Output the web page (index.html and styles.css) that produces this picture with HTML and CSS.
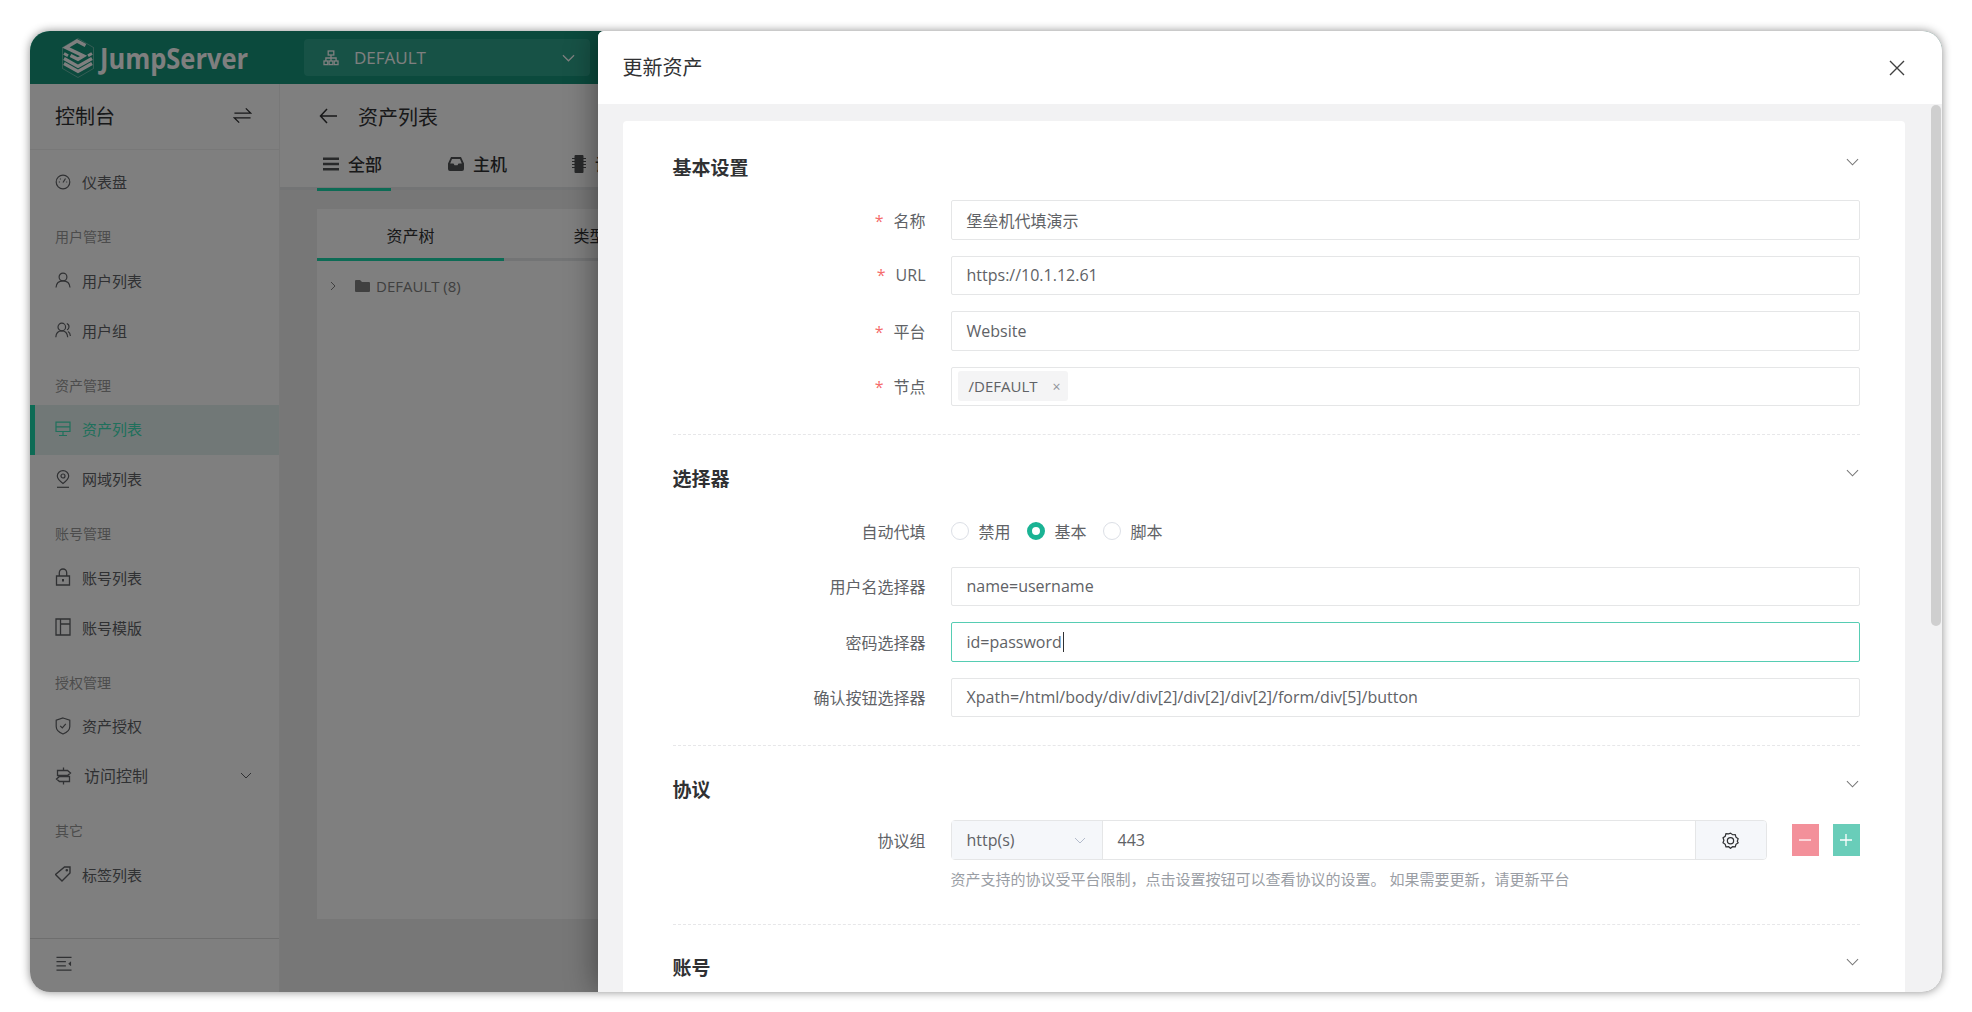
FILE: index.html
```html
<!DOCTYPE html>
<html>
  <head>
    <meta charset="utf-8">
    <title>更新资产</title>
    <link rel="stylesheet" href="styles.css">
  </head>
  <body>
    <div class="window">
      <header class="topbar">
        <div class="logo">
          <svg class="logo-mark" viewBox="2 1 32 40" fill="none" stroke="currentColor">
            <path d="M18 1.500 33.500 10.500v21L18 40.500 2.500 31.500v-21z" stroke-width=".6" opacity=".6"/>
            <path d="M4 21.500 18 29.500l14-8M4 26.500 18 34.500l14-8" stroke-width="3.200"/>
            <path d="M25.500 8.500 17 4 6 10.500l17.500 8.500-5.500 3.200-7.500-3.800" stroke-width="3.400"/>
            <path d="M4 16.500 8 18.800M32 16.500l-4 2.300" stroke-width="3"/>
          </svg>
          <span class="logo-text">JumpServer</span>
        </div>
        <div class="org-select">
          <svg class="org-icon" viewBox="0 0 16 16" fill="none" stroke="currentColor" stroke-width="1.300">
            <rect x="5.200" y="1" width="5.600" height="4"/>
            <rect x="1" y="11" width="3.800" height="3.600"/>
            <rect x="6.100" y="11" width="3.800" height="3.600"/>
            <rect x="11.200" y="11" width="3.800" height="3.600"/>
            <path d="M8 5v6M2.900 11V8h10.200v3"/>
          </svg>
          <span class="org-name">DEFAULT</span>
          <svg class="org-arrow" viewBox="0 0 14 8" fill="none" stroke="currentColor" stroke-width="1.300"><path d="M1 1l6 6 6-6"/></svg>
        </div>
      </header>

      <div class="app">
        <aside class="sidebar">
          <div class="side-head">
            <span>控制台</span>
            <svg class="switch-icon" viewBox="0 0 20 20" fill="none" stroke="currentColor" stroke-width="1.400"><path d="M1.500 7.500h17L13.500 2.500M18.500 12.500h-17l5 5"/></svg>
          </div>
          <nav class="menu">
            <a class="item">
              <svg class="ico" viewBox="0 0 16 16" fill="none" stroke="currentColor" stroke-width="1.200"><circle cx="8" cy="8" r="6.800"/><path d="M8 8.500l2.500-4M3.800 8H5M11.200 8h1M5 4.700l.7.700"/></svg>
              仪表盘
            </a>
            <div class="group">用户管理</div>
            <a class="item">
              <svg class="ico" viewBox="0 0 16 16" fill="none" stroke="currentColor" stroke-width="1.200"><circle cx="8" cy="5" r="3.900"/><path d="M1 15.500c.3-4 3-6.600 7-6.600s6.700 2.600 7 6.600"/></svg>
              用户列表
            </a>
            <a class="item">
              <svg class="ico" viewBox="0 0 16 16" fill="none" stroke="currentColor" stroke-width="1.200"><circle cx="6.800" cy="5" r="3.800"/><path d="M.8 15.300c.2-3.900 2.500-6.400 6-6.400s5.600 2.500 5.900 6.400M11.800 1.500c1.700.7 2.300 2 2.200 3.500-.1 1.300-.8 2.300-2 2.900M13 9.500c1.400.8 2.300 2.600 2.400 4.500"/></svg>
              用户组
            </a>
            <div class="group">资产管理</div>
            <a class="item active">
              <svg class="ico" viewBox="0 0 16 16" fill="none" stroke="currentColor" stroke-width="1.200"><path d="M1 1.200h14v9.300H1zM1 5.800h14M8 10.500v4M4 14.500h8"/></svg>
              资产列表
            </a>
            <a class="item">
              <svg class="ico" viewBox="0 0 16 18" fill="none" stroke="currentColor" stroke-width="1.200"><path d="M8 13.500C4.500 10.800 2.300 8.700 2.300 6A5.700 5.300 0 0 1 13.700 6c0 2.700-2.200 4.800-5.700 7.500z"/><circle cx="8" cy="6" r="2"/><path d="M2 17.300h12"/></svg>
              网域列表
            </a>
            <div class="group">账号管理</div>
            <a class="item">
              <svg class="ico" viewBox="0 0 16 18" fill="none" stroke="currentColor" stroke-width="1.300"><path d="M1.500 8h13v9h-13zM4.300 8V4.700a3.700 3.700 0 0 1 7.400 0V8"/><path d="M8 11v2.500" stroke-width="2"/></svg>
              账号列表
            </a>
            <a class="item">
              <svg class="ico" viewBox="0 0 16 18" fill="none" stroke="currentColor" stroke-width="1.300"><path d="M1 1h14v16H1zM5.500 1v16M5.500 6H15"/></svg>
              账号模版
            </a>
            <div class="group">授权管理</div>
            <a class="item">
              <svg class="ico" viewBox="0 0 16 18" fill="none" stroke="currentColor" stroke-width="1.200"><path d="M8 1l6.800 2.200v6.300c0 3.500-3 6-6.800 7.500-3.800-1.500-6.800-4-6.800-7.500V3.200z"/><path d="M5.200 8.800l2.100 2.100 3.500-4"/></svg>
              资产授权
            </a>
            <a class="item">
              <svg class="ico sign" viewBox="0 0 17 18" fill="none" stroke="currentColor" stroke-width="1.300"><path d="M8.500 .5v3M8.500 14.500v3M2.500 3.500h10l3 2.500-3 2.500h-10zM14.500 9.500h-10L1.500 12l3 2.500h10z"/></svg>
              <span class="item-wide">访问控制</span>
              <svg class="item-arrow" viewBox="0 0 12 7" fill="none" stroke="currentColor" stroke-width="1"><path d="M1 1l5 5 5-5"/></svg>
            </a>
            <div class="group">其它</div>
            <a class="item">
              <svg class="ico" viewBox="0 0 16 16" fill="none" stroke="currentColor" stroke-width="1.400"><path d="M9.500 1H15v6l-8 8-6.500-6.500z"/><circle cx="11.800" cy="4.200" r=".6"/></svg>
              标签列表
            </a>
          </nav>
          <div class="side-foot">
            <svg class="collapse-icon" viewBox="0 0 17 16" fill="none" stroke="currentColor" stroke-width="1.200"><path d="M.5 1h16M.5 5.500h10M.5 10h10M.5 14.500h16"/><path d="M16 5l-3 2.700 3 2.700z" fill="currentColor" stroke="none"/></svg>
          </div>
        </aside>

        <main class="main">
          <div class="page-head">
            <div class="page-title">
              <svg class="back-icon" viewBox="0 0 18 16" fill="none" stroke="currentColor" stroke-width="1.500"><path d="M8 1 1.500 8 8 15M1.500 8H18"/></svg>
              <span>资产列表</span>
            </div>
            <div class="tabs">
              <div class="tab on">
                <svg class="tab-icon" viewBox="0 0 16 14" fill="currentColor"><path d="M0 .5h16v2.600H0zM0 5.700h16v2.600H0zM0 10.900h16v2.600H0z"/></svg>
                全部
              </div>
              <div class="tab">
                <svg class="tab-icon" viewBox="0 0 16 14" fill="currentColor"><path d="M3 0h10l3 6.500V12a2 2 0 0 1-2 2H2a2 2 0 0 1-2-2V6.500zM4 2 2.200 6.500H5.500l1 1.800h3l1-1.800h3.300L12 2z"/></svg>
                主机
              </div>
              <div class="tab">
                <svg class="tab-icon chip" viewBox="0 0 14 18" fill="currentColor"><rect x="2.500" width="9" height="18" rx="1"/><path d="M0 3h14v1H0zM0 6h14v1H0zM0 9h14v1H0zM0 12h14v1H0z"/></svg>
                设备
              </div>
            </div>
          </div>
          <section class="tree-card">
            <div class="tree-tabs">
              <div class="tree-tab on">资产树</div>
              <div class="tree-tab">类型树</div>
            </div>
            <div class="tree-row">
              <svg class="tree-arrow" viewBox="0 0 6 10" fill="none" stroke="currentColor" stroke-width="1"><path d="M1 1l4 4-4 4"/></svg>
              <svg class="folder" viewBox="0 0 15 12" fill="currentColor"><path d="M0 1a1 1 0 0 1 1-1h4l2 2h7a1 1 0 0 1 1 1v8a1 1 0 0 1-1 1H1a1 1 0 0 1-1-1z"/></svg>
              <span>DEFAULT (8)</span>
            </div>
          </section>
        </main>
      </div>

      <div class="overlay"></div>

      <aside class="drawer">
        <div class="drawer-head">
          <span>更新资产</span>
          <svg class="close-icon" viewBox="0 0 16 16" fill="none" stroke="currentColor" stroke-width="1.400"><path d="M1 1l14 14M15 1 1 15"/></svg>
        </div>
        <div class="drawer-body">
          <div class="scroll-thumb"></div>
          <div class="form-card">
            <section class="block">
              <div class="block-title">
                <span>基本设置</span>
                <svg class="fold" viewBox="0 0 14 8" fill="none" stroke="currentColor" stroke-width="1.100"><path d="M1 1l6 6 6-6"/></svg>
              </div>
              <div class="row">
                <label class="lab"><i>*</i>名称</label>
                <div class="field">堡垒机代填演示</div>
              </div>
              <div class="row">
                <label class="lab"><i>*</i>URL</label>
                <div class="field">https://10.1.12.61</div>
              </div>
              <div class="row">
                <label class="lab"><i>*</i>平台</label>
                <div class="field">Website</div>
              </div>
              <div class="row">
                <label class="lab"><i>*</i>节点</label>
                <div class="field tags"><span class="tag">/DEFAULT<b>×</b></span></div>
              </div>
            </section>

            <section class="block">
              <div class="block-title">
                <span>选择器</span>
                <svg class="fold" viewBox="0 0 14 8" fill="none" stroke="currentColor" stroke-width="1.100"><path d="M1 1l6 6 6-6"/></svg>
              </div>
              <div class="row">
                <label class="lab">自动代填</label>
                <div class="radios">
                  <span class="radio"><span class="dot"></span>禁用</span>
                  <span class="radio checked"><span class="dot"></span>基本</span>
                  <span class="radio"><span class="dot"></span>脚本</span>
                </div>
              </div>
              <div class="row">
                <label class="lab">用户名选择器</label>
                <div class="field">name=username</div>
              </div>
              <div class="row">
                <label class="lab">密码选择器</label>
                <div class="field focus">id=password<span class="caret"></span></div>
              </div>
              <div class="row">
                <label class="lab">确认按钮选择器</label>
                <div class="field">Xpath=/html/body/div/div[2]/div[2]/div[2]/form/div[5]/button</div>
              </div>
            </section>

            <section class="block proto-block">
              <div class="block-title">
                <span>协议</span>
                <svg class="fold" viewBox="0 0 14 8" fill="none" stroke="currentColor" stroke-width="1.100"><path d="M1 1l6 6 6-6"/></svg>
              </div>
              <div class="row proto">
                <label class="lab">协议组</label>
                <div class="proto-group">
                  <div class="proto-select">
                    <span>http(s)</span>
                    <svg viewBox="0 0 12 7" fill="none" stroke="currentColor" stroke-width="1"><path d="M1 1l5 5 5-5"/></svg>
                  </div>
                  <div class="proto-port">443</div>
                  <div class="proto-gear">
                    <svg viewBox="0 0 18 18" fill="none" stroke="currentColor" stroke-width="1.300"><path d="M9 1.200l2.200 1.700 2.800-.1.800 2.700 2.300 1.600L16.200 9.800l.9 1.600-2.300 1.600-.8 2.700-2.800-.1L9 17.300l-2-1.700-2.800.1-.8-2.700-2.300-1.600.9-2.600-.9-2.700 2.300-1.600.8-2.700 2.800.1z"/><circle cx="9" cy="9.200" r="3.300"/></svg>
                  </div>
                </div>
                <button class="btn minus"><svg viewBox="0 0 12 12" stroke="currentColor" stroke-width="1.300"><path d="M0 6h12"/></svg></button>
                <button class="btn plus"><svg viewBox="0 0 12 12" stroke="currentColor" stroke-width="1.300"><path d="M0 6h12M6 0v12"/></svg></button>
              </div>
              <p class="help">资产支持的协议受平台限制，点击设置按钮可以查看协议的设置。 如果需要更新，请更新平台</p>
            </section>

            <section class="block last">
              <div class="block-title">
                <span>账号</span>
                <svg class="fold" viewBox="0 0 14 8" fill="none" stroke="currentColor" stroke-width="1.100"><path d="M1 1l6 6 6-6"/></svg>
              </div>
            </section>
          </div>
        </div>
      </aside>
    </div>
  </body>
</html>
```

FILE: styles.css
```css
/* page + window frame */
* {
  box-sizing: border-box;
}

html, body {
  height: 100%;
}

body {
  margin: 0;
  background: #fff;
  font-family: "Open Sans", "Noto Sans CJK SC", sans-serif;
  color: #606266;
  overflow: hidden;
}

.window {
  position: relative;
  display: flex;
  flex-direction: column;
  width: 1912px;
  height: 961px;
  margin: 31px 0 0 30px;
  border-radius: 20px;
  overflow: hidden;
  box-shadow: 0 0 10px rgba(0, 0, 0, .45);
}

/* top bar */
.topbar {
  display: flex;
  align-items: center;
  flex: none;
  height: 53px;
  background: #16947a;
  color: #fff;
}

.logo {
  display: flex;
  align-items: center;
  width: 274px;
  padding-left: 31px;
}

.logo-mark {
  flex: none;
  width: 34px;
  height: 40px;
}

.logo-text {
  margin-left: 5px;
  font-size: 28px;
  font-weight: 700;
  transform: scaleX(.91);
  transform-origin: left center;
  white-space: nowrap;
}

.org-select {
  display: flex;
  align-items: center;
  width: 286px;
  height: 37px;
  padding: 0 15px 0 19px;
  border-radius: 4px;
  background: #2ea58d;
}

.org-icon {
  width: 16px;
  height: 16px;
}

.org-name {
  flex: 1;
  margin-left: 15px;
  font-size: 17px;
}

.org-arrow {
  width: 13px;
  height: 8px;
}

/* left + right of the page */
.app {
  display: flex;
  flex: 1;
  min-height: 0;
}

.sidebar {
  display: flex;
  flex-direction: column;
  flex: none;
  width: 249px;
  background: #fff;
}

.side-head {
  display: flex;
  align-items: center;
  justify-content: space-between;
  flex: none;
  height: 66px;
  padding: 0 27px 2px 25px;
  border-bottom: 1px solid #f0f0f0;
  font-size: 20px;
  color: #303133;
}

.switch-icon {
  width: 19px;
  height: 19px;
}

.menu {
  flex: 1;
  padding-top: 8px;
}

.group {
  height: 48.6px;
  padding: 19px 0 0 25px;
  font-size: 14px;
  line-height: 20px;
  color: #999;
}

.item {
  display: flex;
  align-items: center;
  height: 50px;
  padding: 0 0 3px 25px;
  font-size: 15px;
}

.item .ico {
  flex: none;
  width: 16px;
  height: 18px;
  margin-right: 11px;
}

.item .ico.sign {
  width: 17px;
  margin-right: 10px;
}

.item.active {
  padding-left: 20px;
  border-left: 5px solid #1ad6aa;
  background: #e3f1ee;
  color: #3fe0b8;
}

.item-wide {
  flex: 1;
  margin: 0 0 1px 2px;
  font-size: 16px;
}

.item-arrow {
  width: 12px;
  height: 7px;
  margin-right: 27px;
}

.side-foot {
  display: flex;
  align-items: center;
  flex: none;
  height: 54px;
  padding: 0 0 3px 26px;
  border-top: 1px solid #ddd;
}

.collapse-icon {
  width: 16px;
  height: 16px;
}

.main {
  flex: 1;
  min-width: 0;
  background: #eee;
  border-left: 1px solid #f0f0f0;
}

.page-head {
  height: 106px;
  padding: 12px 0 0 37px;
  background: #fff;
  border-bottom: 3px solid #e7e8ea;
}

.page-title {
  display: flex;
  align-items: center;
  height: 40px;
  padding-left: 2px;
  font-size: 20px;
  color: #303133;
}

.back-icon {
  width: 18px;
  height: 16px;
  margin-right: 21px;
}

.tabs {
  display: flex;
  margin-top: 5px;
}

.tab {
  display: flex;
  align-items: center;
  width: 74px;
  height: 50px;
  margin-right: 56px;
  padding: 0 0 2px 6px;
  border-bottom: 3px solid transparent;
  font-size: 17px;
  font-weight: 500;
  color: #303133;
  white-space: nowrap;
}

.tab.on {
  border-bottom-color: #1ad6aa;
}

.tab:nth-child(2) {
  margin-left: -5px;
}

.tab:nth-child(3) {
  margin-left: -6px;
}

.tab-icon {
  width: 16px;
  height: 14px;
  margin-right: 9px;
  color: #505255;
}

.tab-icon.chip {
  width: 14px;
  height: 18px;
}

.tree-card {
  height: 710px;
  margin: 19px 0 0 37px;
  background: #fff;
}

.tree-tabs {
  display: flex;
  height: 52px;
  border-bottom: 3px solid #e7e8ea;
}

.tree-tab {
  width: 187px;
  height: 52px;
  font-size: 16px;
  line-height: 54px;
  text-align: center;
  color: #303133;
  white-space: nowrap;
}

.tree-tab.on {
  border-bottom: 3px solid #1ad6aa;
}

.tree-row {
  display: flex;
  align-items: center;
  margin-top: 14px;
  padding-left: 13px;
  font-size: 15px;
  line-height: 22px;
  color: #808080;
}

.tree-arrow {
  width: 6px;
  height: 10px;
  margin-right: 19px;
}

.folder {
  width: 15px;
  height: 12px;
  margin-right: 6px;
}

/* everything under the drawer gets dimmed */
.overlay {
  position: absolute;
  inset: 0;
  background: rgba(0, 0, 0, .5);
}

.drawer {
  position: absolute;
  top: 0;
  right: 0;
  bottom: 0;
  display: flex;
  flex-direction: column;
  width: 1344.500px;
  background: #f2f2f3;
  border-top-left-radius: 6px;
  box-shadow: 0 0 32px rgba(0, 0, 0, .45);
}

.drawer-head {
  display: flex;
  align-items: center;
  justify-content: space-between;
  flex: none;
  height: 73px;
  padding: 0 37px 2px 25px;
  background: #fff;
  border-top-left-radius: 6px;
  font-size: 20px;
  color: #303133;
}

.close-icon {
  width: 16px;
  height: 16px;
  margin-top: 2px;
  color: #404040;
}

.drawer-body {
  position: relative;
  flex: 1;
  min-height: 0;
  padding: 17px 37px 0 25px;
  overflow: hidden;
}

.scroll-thumb {
  position: absolute;
  top: 1px;
  right: 1px;
  width: 10px;
  height: 521px;
  border-radius: 5px;
  background: #cfcfcf;
}

.form-card {
  height: 900px;
  padding: 3px 45px 0 50px;
  border-radius: 4px;
  background: #fff;
}

/* form sections */
.block {
  padding: 29px 0 28px;
  border-bottom: 1px dashed #e7e7e9;
}

.block.last {
  padding-top: 28px;
  border-bottom: 0;
}

.block-title {
  display: flex;
  align-items: flex-start;
  justify-content: space-between;
  height: 30px;
  margin-bottom: 17px;
  font-size: 19px;
  font-weight: 700;
  line-height: 30px;
  color: #303133;
}

.fold {
  width: 13px;
  height: 8px;
  margin: 5px 1px 0 0;
  color: #777;
}

.row {
  display: flex;
  align-items: center;
  height: 39.500px;
  margin-bottom: 16px;
}

.row:last-child {
  margin-bottom: 0;
}

.lab {
  flex: none;
  width: 253px;
  margin-right: 25px;
  font-size: 16px;
  text-align: right;
  color: #606266;
}

.lab i {
  margin-right: 10px;
  font-style: normal;
  color: #f56c6c;
}

.field {
  display: flex;
  align-items: center;
  flex: 1;
  height: 100%;
  padding: 0 15px;
  border: 1px solid #e5e6e7;
  border-radius: 2px;
  font-size: 16px;
  color: #606266;
  background: #fff;
}

.field.focus {
  border-color: #56cdb3;
}

.caret {
  width: 1px;
  height: 20px;
  margin-left: 1px;
  background: #303133;
}

.field.tags {
  padding: 0 6px;
}

.tag {
  display: flex;
  align-items: center;
  height: 30px;
  padding: 0 7px 0 11px;
  border-radius: 3px;
  background: #f4f4f5;
  font-size: 15px;
  color: #606266;
}

.tag b {
  margin-left: 15px;
  font-size: 14px;
  font-weight: 400;
  color: #909399;
}

.radios {
  display: flex;
  gap: 16px;
  font-size: 16px;
  color: #606266;
}

.radio {
  display: flex;
  align-items: center;
}

.dot {
  width: 18px;
  height: 18px;
  margin-right: 10px;
  border: 1px solid #dcdfe6;
  border-radius: 50%;
  background: #fff;
}

.checked .dot {
  border: 5.500px solid #1ab394;
}

.proto-block {
  padding-bottom: 35px;
}

.proto {
  height: 40px;
  margin: -2px 0 9px;
}

.proto-group {
  display: flex;
  flex: none;
  width: 816px;
  height: 100%;
  border: 1px solid #e5e6e7;
  border-radius: 4px;
  font-size: 16px;
  color: #606266;
}

.proto-select {
  display: flex;
  align-items: center;
  justify-content: space-between;
  width: 151px;
  padding: 0 16px 0 15px;
  border-right: 1px solid #e5e6e7;
  background: #f5f7fa;
}

.proto-select svg {
  width: 12px;
  height: 7px;
  color: #b4bccc;
}

.proto-port {
  flex: 1;
  padding-left: 15px;
  line-height: 38px;
}

.proto-gear {
  display: flex;
  align-items: center;
  justify-content: center;
  width: 71px;
  border-left: 1px solid #e5e6e7;
  border-radius: 0 3px 3px 0;
  background: #f5f7fa;
  color: #303133;
}

.proto-gear svg {
  width: 17px;
  height: 17px;
}

.btn {
  display: flex;
  align-items: center;
  justify-content: center;
  width: 27px;
  height: 32px;
  margin-left: 25px;
  padding: 0;
  border: 0;
  color: #fff;
  opacity: .65;
}

.btn + .btn {
  margin-left: 14px;
}

.btn svg {
  width: 12px;
  height: 12px;
}

.minus {
  background: #ed5565;
}

.plus {
  background: #1ab394;
}

.help {
  margin: 0 0 0 278px;
  font-size: 15px;
  line-height: 20px;
  color: #9a9ea5;
}
```
